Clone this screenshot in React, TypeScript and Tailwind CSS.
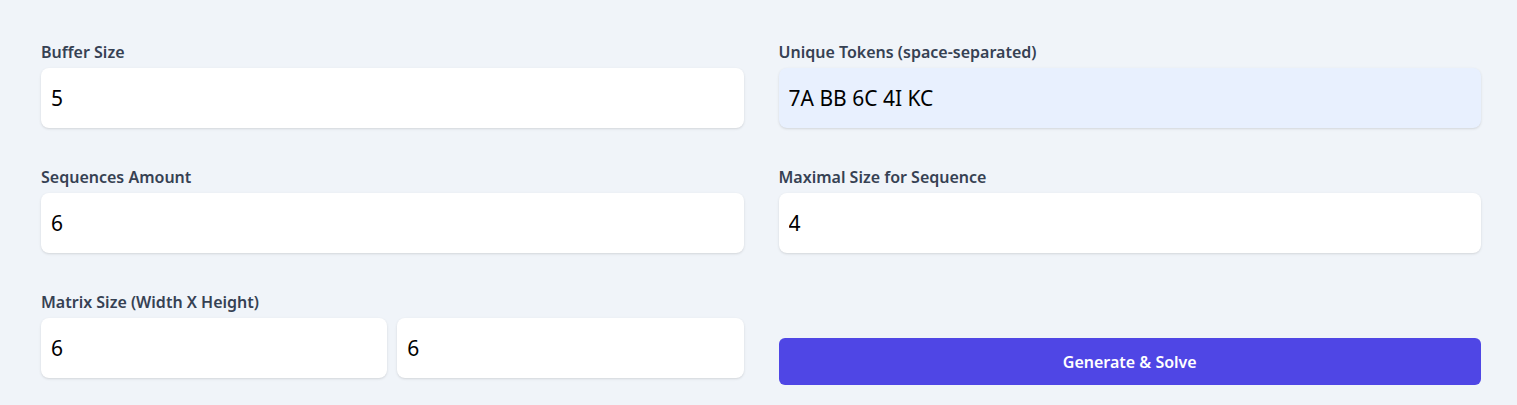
const Field = ({ label, value, autofill }: { label: string; value: string; autofill?: boolean }) => (
  <div className="flex flex-col">
    <label className="text-base leading-6 font-semibold text-gray-700 mb-1">{label}</label>
    <input
      readOnly
      value={value}
      className={`h-[60px] w-full rounded-lg px-[10px] text-[21px] text-black shadow-sm outline-none ${autofill ? "bg-[#e8f0fe]" : "bg-white"}`}
    />
  </div>
);

const App = () => {
  return (
    <div className="min-h-[405px] w-full bg-[#f0f4f9] pl-[41px] pr-[36px] pt-[40px] pb-[20px] font-['Noto_Sans',sans-serif]">
      <div className="grid grid-cols-2 gap-x-[35px] gap-y-[37px]">
        <Field label="Buffer Size" value="5" />
        <Field label="Unique Tokens (space-separated)" value="7A BB 6C 4I KC" autofill />
        <Field label="Sequences Amount" value="6" />
        <Field label="Maximal Size for Sequence" value="4" />
        <div className="flex flex-col">
          <label className="text-base leading-6 font-semibold text-gray-700 mb-1">Matrix Size (Width X Height)</label>
          <div className="flex gap-[10px]">
            <input readOnly value="6" className="h-[60px] w-full rounded-lg bg-white px-[10px] text-[21px] text-black shadow-sm outline-none" />
            <input readOnly value="6" className="h-[60px] w-full rounded-lg bg-white px-[10px] text-[21px] text-black shadow-sm outline-none" />
          </div>
        </div>
        <div className="flex flex-col">
          <button className="mt-12 h-[47px] w-full rounded-md bg-[#4f46e5] text-base font-semibold text-white">
            Generate &amp; Solve
          </button>
        </div>
      </div>
    </div>
  );
};

export default App;
